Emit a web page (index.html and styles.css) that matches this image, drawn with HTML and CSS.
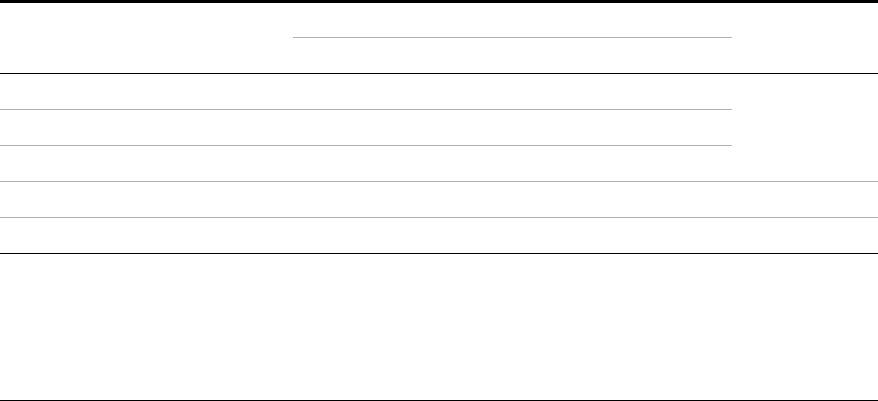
FILE: index.html
```html
<!DOCTYPE html>
<html lang="en">
<head>
<meta charset="utf-8">
<title>Table</title>
<link rel="stylesheet" href="styles.css">
</head>
<body>
<div class="sheet">
  <div class="cell head-side span-head"></div>
  <div class="cell group-head"></div>
  <div class="cell head-side span-head"></div>
  <div class="cell head-sub"></div>

  <div class="cell row"></div>
  <div class="cell row"></div>
  <div class="cell row span-three"></div>
  <div class="cell row"></div>
  <div class="cell row"></div>
  <div class="cell row"></div>
  <div class="cell row"></div>

  <div class="cell row"></div>
  <div class="cell row"></div>
  <div class="cell row"></div>
  <div class="cell row last"></div>
  <div class="cell row last"></div>
  <div class="cell row last"></div>

  <div class="cell foot"></div>
</div>
</body>
</html>
```

FILE: styles.css
```css
* { box-sizing: border-box; }
html, body { margin: 0; padding: 0; background: #fff; }
body { font-family: "Liberation Sans", Arial, sans-serif; font-size: 14px; color: #000; }

.sheet {
  display: grid;
  width: 878px;
  grid-template-columns: 293px 439px 1fr;
  grid-template-rows: 35px 36px repeat(5, 36px) 146px;
  border-top: 3px solid #000;
  border-bottom: 1px solid #000;
}

.cell { min-width: 0; }

.span-head { grid-row: span 2; border-bottom: 1px solid #000; }
.group-head { border-bottom: 1px solid #b3b3b3; }
.head-sub { grid-column: 2; border-bottom: 1px solid #000; }

.row { border-bottom: 1px solid #b3b3b3; }
.span-three { grid-row: span 3; }
.last { border-bottom: 1px solid #000; }

.foot { grid-column: 1 / -1; }
```
